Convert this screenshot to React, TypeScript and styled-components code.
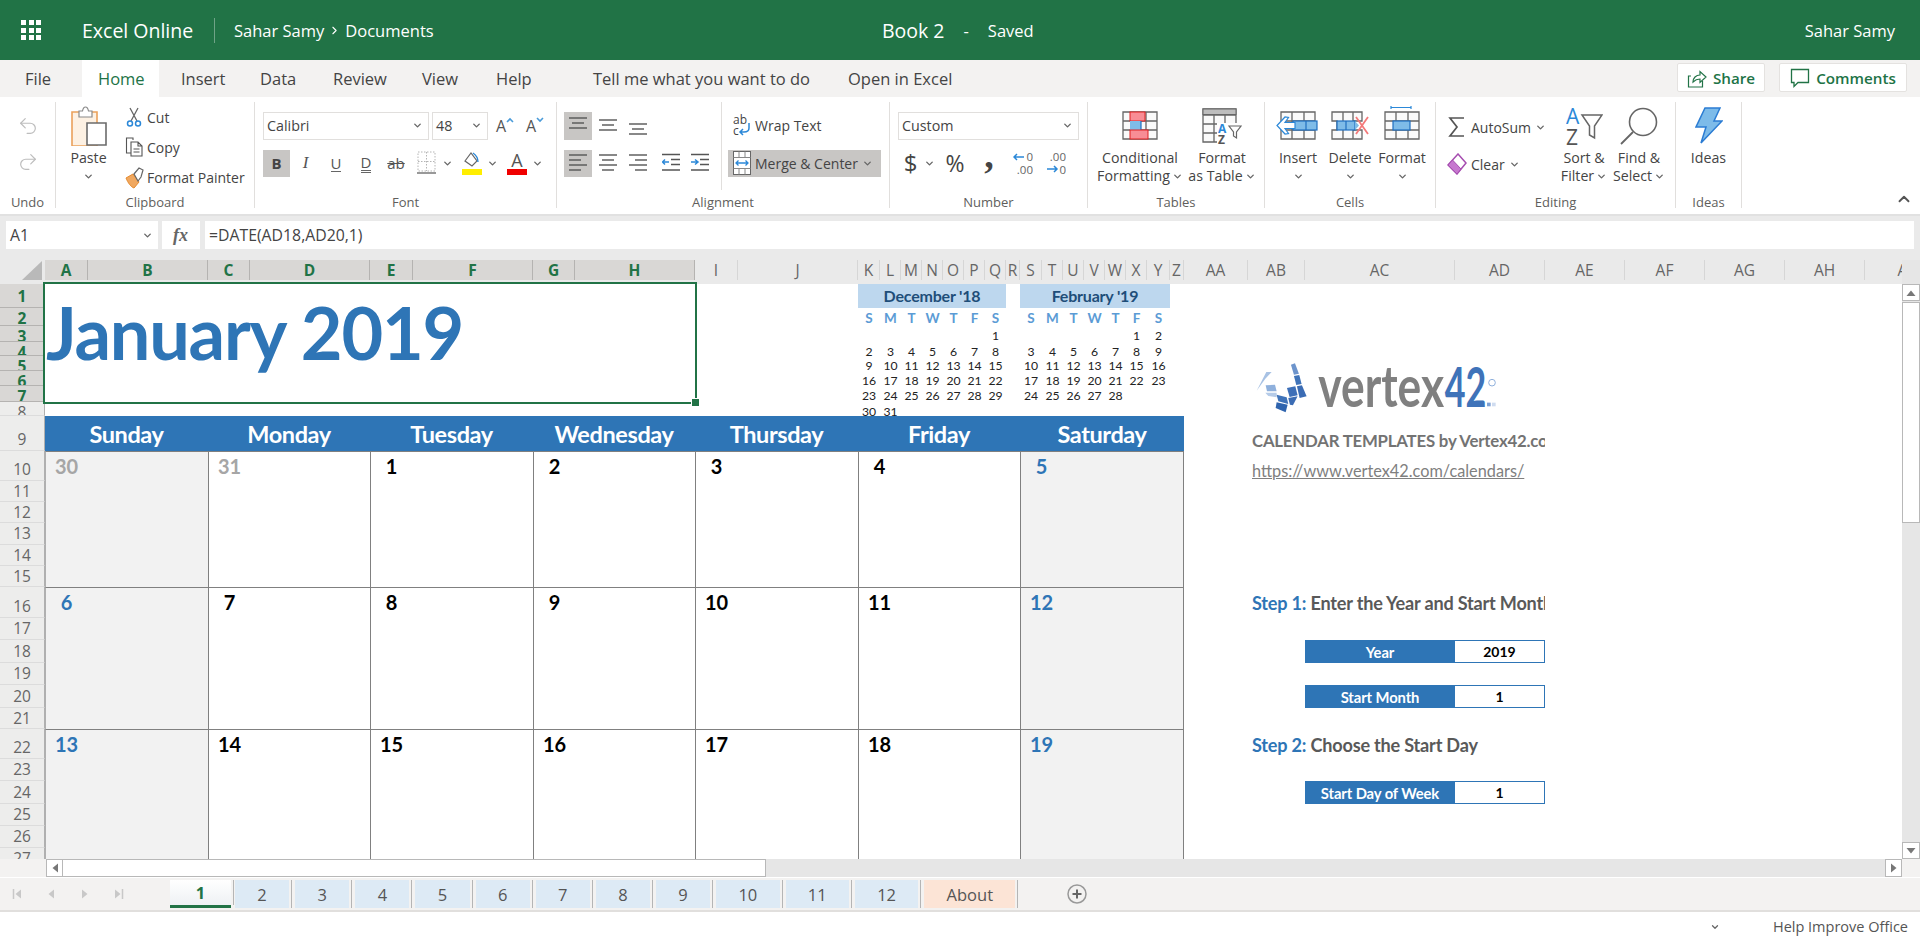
import React from "react";
import styled, { createGlobalStyle } from "styled-components";
import { Undo2, Redo2, ChevronDown, ChevronUp, ChevronRight } from "lucide-react";

const GlobalStyle = createGlobalStyle`
  html, body { margin: 0; padding: 0; background: #fff; }
  body { font-family: "Open Sans", "Noto Sans", sans-serif; }
  * { box-sizing: border-box; }
`;

const UI_FONT = `"Open Sans", "Noto Sans", sans-serif`;
const SHEET_FONT = `Lato, "Liberation Sans", sans-serif`;
const GREEN = "#217346";
const BLUE = "#2e75b6";

/* ---------- sheet data ---------- */
const COLUMNS: [string, number][] = [
  ["A", 43], ["B", 120], ["C", 42], ["D", 120], ["E", 43], ["F", 120], ["G", 42], ["H", 120],
  ["I", 43], ["J", 120], ["K", 22], ["L", 21], ["M", 21], ["N", 21], ["O", 21], ["P", 21], ["Q", 21], ["R", 14],
  ["S", 22], ["T", 21], ["U", 21], ["V", 21], ["W", 21], ["X", 21], ["Y", 23], ["Z", 14],
  ["AA", 64], ["AB", 57], ["AC", 150], ["AD", 90], ["AE", 80], ["AF", 80], ["AG", 80], ["AH", 80], ["AI", 80],
];
const ROW_HEIGHTS = [24, 18, 16, 14, 15, 15, 16, 14, 35, 30, 21, 21, 22, 21, 21, 31, 22, 23, 22, 23, 21, 30, 22, 23, 22, 22, 21];

// grid line of a column: the row header sits in line 1
const col = (name: string) => COLUMNS.findIndex((c) => c[0] === name) + 2;
const row = (n: number) => n + 1;

const DAY_SPANS: [string, string][] = [["A", "C"], ["C", "E"], ["E", "G"], ["G", "I"], ["I", "K"], ["K", "S"], ["S", "AA"]];
const DAY_NAMES = ["Sunday", "Monday", "Tuesday", "Wednesday", "Thursday", "Friday", "Saturday"];
const WEEKS = [
  { from: 10, to: 16, days: ["30", "31", "1", "2", "3", "4", "5"] },
  { from: 16, to: 22, days: ["6", "7", "8", "9", "10", "11", "12"] },
  { from: 22, to: 28, days: ["13", "14", "15", "16", "17", "18", "19"] },
];
const MINI_LETTERS = ["S", "M", "T", "W", "T", "F", "S"];
const MINI_DEC = [
  ["", "", "", "", "", "", "1"],
  ["2", "3", "4", "5", "6", "7", "8"],
  ["9", "10", "11", "12", "13", "14", "15"],
  ["16", "17", "18", "19", "20", "21", "22"],
  ["23", "24", "25", "26", "27", "28", "29"],
  ["30", "31", "", "", "", "", ""],
];
const MINI_FEB = [
  ["", "", "", "", "", "1", "2"],
  ["3", "4", "5", "6", "7", "8", "9"],
  ["10", "11", "12", "13", "14", "15", "16"],
  ["17", "18", "19", "20", "21", "22", "23"],
  ["24", "25", "26", "27", "28", "", ""],
];
const SHEET_TABS = ["2", "3", "4", "5", "6", "7", "8", "9", "10", "11", "12"];

/* ---------- page ---------- */
const Page = styled.div`
  width: 1920px;
  height: 937px;
  display: flex;
  flex-direction: column;
  overflow: hidden;
  font-family: ${UI_FONT};
`;

/* ---------- title bar ---------- */
const TopBar = styled.header`
  height: 60px;
  flex-shrink: 0;
  background: ${GREEN};
  color: #fff;
  display: flex;
  align-items: center;
  position: relative;
`;
const Waffle = styled.div`
  margin-left: 21px;
  width: 20px;
  height: 20px;
  display: grid;
  grid-template-columns: repeat(3, 5px);
  grid-template-rows: repeat(3, 5px);
  gap: 2.5px;
  span { background: #fff; }
`;
const AppName = styled.div`
  margin-left: 41px;
  font-size: 19.5px;
  width: 132px;
  white-space: nowrap;
`;
const TopDivider = styled.div`
  width: 1px;
  height: 25px;
  background: #6fa387;
`;
const Crumb = styled.div`
  font-size: 16.5px;
  margin-left: 19px;
  display: flex;
  align-items: center;
  gap: 4px;
`;
const DocTitle = styled.div`
  position: absolute;
  left: 882px;
  top: 0;
  height: 60px;
  display: flex;
  align-items: center;
  font-size: 19.5px;
  span { font-size: 16.5px; }
  span:first-of-type { margin: 0 19px; }
`;
const UserName = styled.div`
  margin-left: auto;
  margin-right: 25px;
  font-size: 16.5px;
`;

/* ---------- ribbon tabs ---------- */
const TabRow = styled.nav`
  height: 37px;
  flex-shrink: 0;
  background: #f3f2f1;
  display: flex;
  align-items: stretch;
  position: relative;
`;
const RibbonTab = styled.div<{ $w: number; $pl: number; $active?: boolean }>`
  width: ${(p) => p.$w}px;
  padding-left: ${(p) => p.$pl}px;
  display: flex;
  align-items: center;
  font-size: 16.5px;
  color: ${(p) => (p.$active ? GREEN : "#444")};
  background: ${(p) => (p.$active ? "#fff" : "transparent")};
  white-space: nowrap;
`;
const TabActions = styled.div`
  margin-left: auto;
  margin-right: 13px;
  display: flex;
  align-items: center;
  gap: 14px;
`;
const ActionButton = styled.div<{ $w: number }>`
  width: ${(p) => p.$w}px;
  height: 29px;
  margin-top: -2px;
  background: #fff;
  border: 1px solid #e4e2e0;
  border-radius: 2px;
  display: flex;
  align-items: center;
  justify-content: center;
  gap: 6px;
  color: ${GREEN};
  font-size: 15.2px;
  font-weight: 600;
`;

/* ---------- ribbon ---------- */
const Ribbon = styled.section`
  height: 119px;
  flex-shrink: 0;
  background: #fff;
  border-bottom: 2px solid #e1e1e1;
  display: flex;
  padding-top: 5px;
  padding-bottom: 6px;
  color: #444;
`;
const Group = styled.div<{ $w: number }>`
  width: ${(p) => p.$w}px;
  flex-shrink: 0;
  display: flex;
  flex-direction: column;
  border-right: 1px solid #e1dfdd;
`;
const GroupBody = styled.div<{ $pl?: number }>`
  flex: 1;
  display: flex;
  padding-left: ${(p) => p.$pl ?? 0}px;
  min-height: 0;
`;
const GroupLabel = styled.div`
  height: 12px;
  line-height: 12px;
  font-size: 13px;
  text-align: center;
  color: #605e5c;
`;
const TallButton = styled.div<{ $w: number }>`
  width: ${(p) => p.$w}px;
  flex-shrink: 0;
  display: flex;
  flex-direction: column;
  align-items: center;
  font-size: 14.2px;
  line-height: 18px;
  white-space: nowrap;
`;
const TallIcon = styled.div`
  height: 47px;
  display: flex;
  align-items: center;
  justify-content: center;
`;
const TextLine = styled.div`
  height: 18px;
  display: flex;
  align-items: center;
  gap: 2px;
`;
const SmallColumn = styled.div<{ $w?: number; $pl?: number; $pt?: number; $gap?: number }>`
  ${(p) => (p.$w ? `width: ${p.$w}px;` : "")}
  flex-shrink: 0;
  display: flex;
  flex-direction: column;
  padding-left: ${(p) => p.$pl ?? 0}px;
  padding-top: ${(p) => p.$pt ?? 0}px;
  gap: ${(p) => p.$gap ?? 0}px;
`;
const SmallButton = styled.div<{ $gap?: number }>`
  height: 30px;
  display: flex;
  align-items: center;
  gap: ${(p) => p.$gap ?? 4}px;
  font-size: 14px;
  white-space: nowrap;
`;
const ToolStack = styled.div<{ $w?: number }>`
  ${(p) => (p.$w ? `width: ${p.$w}px; flex-shrink: 0;` : "")}
  padding-top: 10px;
  display: flex;
  flex-direction: column;
  gap: 10px;
`;
const ToolRow = styled.div`
  height: 27.5px;
  display: flex;
  align-items: stretch;
`;
const Tool = styled.div<{ $w: number; $h?: number; $ml?: number; $on?: boolean }>`
  width: ${(p) => p.$w}px;
  ${(p) => (p.$h ? `height: ${p.$h}px;` : "")}
  margin-left: ${(p) => p.$ml ?? 0}px;
  flex-shrink: 0;
  display: flex;
  align-items: center;
  justify-content: center;
  background: ${(p) => (p.$on ? "#c8c6c4" : "transparent")};
`;
const DropBox = styled.div<{ $w: number; $ml?: number }>`
  width: ${(p) => p.$w}px;
  margin-left: ${(p) => p.$ml ?? 0}px;
  border: 1.5px solid #e1dfdd;
  display: flex;
  align-items: center;
  justify-content: space-between;
  padding: 0 5px 0 3px;
  font-size: 14.3px;
`;
const GlyphB = styled.span`
  font: 700 15px ${UI_FONT};
  color: #444;
`;
const GlyphI = styled.span`
  font: italic 400 17px "Liberation Serif", serif;
  color: #555;
`;
const GlyphU = styled.span<{ $double?: boolean }>`
  font: 400 15px ${UI_FONT};
  color: #555;
  line-height: 16px;
  border-bottom: ${(p) => (p.$double ? "3px double #666" : "1.5px solid #666")};
`;
const GlyphStrike = styled.span`
  font: 400 15px ${UI_FONT};
  color: #555;
  text-decoration: line-through;
`;
const GlyphLarge = styled.span<{ $size: number }>`
  font-family: ${UI_FONT};
  font-size: ${(p) => p.$size}px;
  color: #444;
  line-height: 22px;
`;
const GlyphComma = styled.span`
  font: 700 38px/22px "Liberation Serif", serif;
  color: #444;
  padding-bottom: 16px;
`;
const GlyphA = styled.span`
  font-size: 16px;
  line-height: 18px;
  color: #555;
`;
const SizeToggle = styled.span`
  display: flex;
  align-items: flex-start;
`;
const InnerDivider = styled.div`
  width: 1px;
  height: 88px;
  background: #e1dfdd;
  flex-shrink: 0;
`;
const WrapColumn = styled.div`
  padding: 10px 0 0 6px;
  display: flex;
  flex-direction: column;
  gap: 10px;
`;
const WrapRow = styled.div<{ $on?: boolean }>`
  width: 153px;
  height: 27.5px;
  display: flex;
  align-items: center;
  gap: 4px;
  padding-left: 5px;
  font-size: 14px;
  white-space: nowrap;
  background: ${(p) => (p.$on ? "#c8c6c4" : "transparent")};
`;
const Collapse = styled.div`
  margin-left: auto;
  align-self: flex-end;
  margin-right: 7px;
  display: flex;
  color: #555;
`;

/* ---------- formula bar ---------- */
const FormulaBar = styled.div`
  height: 44px;
  flex-shrink: 0;
  background: #eaeaea;
  display: flex;
  padding: 5px 6px 11px 6px;
  gap: 4px;
`;
const FormulaBox = styled.div<{ $w?: number }>`
  ${(p) => (p.$w ? `width: ${p.$w}px; flex-shrink: 0;` : "flex: 1; margin-left: 1px;")}
  background: #fff;
  display: flex;
  align-items: center;
  justify-content: ${(p) => (p.$w === 38 ? "center" : "space-between")};
  padding: 0 5px 0 4px;
  font-size: 15.8px;
  color: #444;
`;
const FxMark = styled.span`
  font: italic 700 18px "Liberation Serif", serif;
  color: #666;
`;

/* ---------- sheet ---------- */
const SheetArea = styled.div`
  height: 599px;
  flex-shrink: 0;
  display: flex;
  background: #eaeaea;
`;
const SheetClip = styled.div`
  width: 1902px;
  height: 599px;
  overflow: hidden;
  position: relative;
`;
const SheetGrid = styled.div`
  display: grid;
  width: max-content;
  background: #fff;
  grid-template-columns: 45px ${COLUMNS.map((c) => `${c[1]}px`).join(" ")};
  grid-template-rows: 24px ${ROW_HEIGHTS.map((h) => `${h}px`).join(" ")};
`;
const Corner = styled.div`
  grid-column: 1;
  grid-row: 1;
  background: #eaeaea;
  position: relative;
  &::after {
    content: "";
    position: absolute;
    left: 22px;
    top: 1px;
    border-style: solid;
    border-width: 0 0 19px 20px;
    border-color: transparent transparent #b9b9b9 transparent;
  }
`;
const ColHead = styled.div<{ $i: number; $on: boolean }>`
  grid-column: ${(p) => p.$i + 2};
  grid-row: 1;
  height: 24px;
  background: #eaeaea;
  overflow: hidden;
  div {
    height: 20px;
    display: flex;
    align-items: center;
    justify-content: center;
    font-size: 15.5px;
    font-weight: ${(p) => (p.$on ? 700 : 400)};
    color: ${(p) => (p.$on ? GREEN : "#666")};
    background: ${(p) => (p.$on ? "#d9d7d5" : "transparent")};
    border-right: 1px solid ${(p) => (p.$on ? "#b5b3b1" : "#d6d6d6")};
  }
`;
const RowHead = styled.div<{ $r: number; $h: number; $on: boolean }>`
  grid-column: 1;
  grid-row: ${(p) => p.$r + 1};
  overflow: hidden;
  padding-top: ${(p) => Math.max(4, p.$h - 18)}px;
  text-align: center;
  line-height: 13px;
  font-size: 15.5px;
  font-weight: ${(p) => (p.$on ? 700 : 400)};
  color: ${(p) => (p.$on ? GREEN : "#666")};
  background: ${(p) => (p.$on ? "#d9d7d5" : "#ededec")};
  border-bottom: 1px solid ${(p) => (p.$on ? "#b5b3b1" : "#dcdcdc")};
  border-right: 1px solid #b0b0b0;
`;
const TitleCell = styled.div`
  grid-column: ${col("A")} / ${col("I")};
  grid-row: ${row(1)} / ${row(8)};
  position: relative;
  z-index: 2;
  outline: 2.7px solid ${GREEN};
  padding-left: 1px;
  font: 700 72px/96px ${SHEET_FONT};
  color: ${BLUE};
  letter-spacing: -1.2px;
  white-space: nowrap;
  &::after {
    content: "";
    position: absolute;
    right: -5px;
    bottom: -5px;
    width: 7px;
    height: 7px;
    background: ${GREEN};
    border: 1px solid #fff;
  }
`;
const MiniHeader = styled.div<{ $from: string; $to: string }>`
  grid-column: ${(p) => col(p.$from)} / ${(p) => col(p.$to)};
  grid-row: ${row(1)};
  background: #bdd7ee;
  color: #1f4e79;
  font: 700 16px/24px ${SHEET_FONT};
  letter-spacing: -0.2px;
  text-align: center;
  white-space: nowrap;
`;
const MiniLetter = styled.div<{ $c: number; $r: number }>`
  grid-column: ${(p) => p.$c};
  grid-row: ${(p) => p.$r};
  color: #5b9bd5;
  font: 700 13.5px/21px ${SHEET_FONT};
  text-align: center;
`;
const MiniDay = styled.div<{ $c: number; $r: number }>`
  grid-column: ${(p) => p.$c};
  grid-row: ${(p) => p.$r};
  color: #222;
  font: 400 12.2px/19px ${SHEET_FONT};
  text-align: center;
  white-space: nowrap;
  display: flex;
  justify-content: center;
  z-index: 1;
`;
const DayHeader = styled.div<{ $c1: number; $c2: number }>`
  grid-column: ${(p) => p.$c1} / ${(p) => p.$c2};
  grid-row: ${row(9)};
  background: ${BLUE};
  color: #fff;
  display: flex;
  align-items: center;
  justify-content: center;
  font: 700 23.5px ${SHEET_FONT};
  letter-spacing: -0.4px;
  white-space: nowrap;
`;
const DayCell = styled.div<{ $c1: number; $c2: number; $r1: number; $r2: number; $weekend: boolean; $first: boolean; $last: boolean }>`
  grid-column: ${(p) => p.$c1} / ${(p) => p.$c2};
  grid-row: ${(p) => p.$r1} / ${(p) => p.$r2};
  background: ${(p) => (p.$weekend ? "#f2f2f2" : "#fff")};
  border-top: 1px solid #808080;
  border-left: 1px solid ${(p) => (p.$first ? "#b0b0b0" : "#808080")};
  ${(p) => (p.$last ? "border-right: 1px solid #808080;" : "")}
`;
const DayNumber = styled.div<{ $tone: "muted" | "weekend" | "plain" }>`
  width: 43px;
  height: 30px;
  margin: -1px 0 0 -1px;
  display: flex;
  align-items: center;
  justify-content: center;
  font: 700 20px ${SHEET_FONT};
  color: ${(p) => (p.$tone === "muted" ? "#a6a6a6" : p.$tone === "weekend" ? BLUE : "#000")};
`;
const LogoSlot = styled.div`
  grid-column: ${col("AB")} / ${col("AE")};
  grid-row: ${row(1)} / ${row(9)};
  padding: 78px 0 0 7px;
`;
const PanelHeading = styled.div`
  grid-column: ${col("AB")} / ${col("AE")};
  grid-row: ${row(9)};
  overflow: hidden;
  white-space: nowrap;
  padding: 15px 0 0 4px;
  color: #737373;
  font: 700 16.8px/20px ${SHEET_FONT};
  letter-spacing: -0.2px;
`;
const PanelLink = styled.div`
  grid-column: ${col("AB")} / ${col("AE")};
  grid-row: ${row(10)};
  overflow: hidden;
  white-space: nowrap;
  padding: 0 0 0 4px;
  color: #7f7f7f;
  font: 400 16.3px/40px ${SHEET_FONT};
  text-decoration: underline;
`;
const StepLine = styled.div<{ $r: number }>`
  grid-column: ${col("AB")} / ${col("AE")};
  grid-row: ${(p) => row(p.$r)};
  overflow: hidden;
  white-space: nowrap;
  padding-left: 4px;
  color: #595959;
  font: 700 18.1px/33px ${SHEET_FONT};
  letter-spacing: -0.2px;
  span { color: ${BLUE}; }
`;
const FormLabel = styled.div<{ $r: number }>`
  grid-column: ${col("AC")};
  grid-row: ${(p) => row(p.$r)};
  background: ${BLUE};
  color: #fff;
  display: flex;
  align-items: center;
  justify-content: center;
  font: 700 14.8px ${SHEET_FONT};
  letter-spacing: -0.1px;
  white-space: nowrap;
`;
const FormValue = styled.div<{ $r: number }>`
  grid-column: ${col("AD")};
  grid-row: ${(p) => row(p.$r)};
  border: 1px solid ${BLUE};
  border-left: 0;
  color: #000;
  display: flex;
  align-items: center;
  justify-content: center;
  font: 700 14px ${SHEET_FONT};
`;

/* ---------- scrollbars ---------- */
const VScroll = styled.div`
  width: 18px;
  flex-shrink: 0;
  display: flex;
  flex-direction: column;
  padding-top: 24px;
  background: #e6e6e6;
`;
const ScrollButton = styled.div<{ $w?: number; $h?: number }>`
  width: ${(p) => p.$w ?? 18}px;
  height: ${(p) => p.$h ?? 17}px;
  flex-shrink: 0;
  background: #fff;
  border: 1px solid #b8b8b8;
  display: flex;
  align-items: center;
  justify-content: center;
`;
const VThumb = styled.div`
  height: 221px;
  background: #fff;
  border: 1px solid #b8b8b8;
  margin-top: 1px;
`;
const VGap = styled.div`
  flex: 1;
`;
const HScrollRow = styled.div`
  height: 18px;
  flex-shrink: 0;
  display: flex;
  background: #f3f2f1;
`;
const HTrack = styled.div`
  width: 1856px;
  margin-left: 46px;
  background: #e6e6e6;
  display: flex;
  justify-content: space-between;
`;
const HLeft = styled.div`
  display: flex;
`;
const HThumb = styled.div`
  width: 703px;
  background: #fff;
  border: 1px solid #b8b8b8;
  border-left: 0;
`;

/* ---------- sheet tabs ---------- */
const TabBar = styled.div`
  height: 35px;
  flex-shrink: 0;
  background: #f3f2f1;
  border-top: 1px solid #fff;
  border-bottom: 2px solid #e1dfdd;
  display: flex;
  align-items: center;
`;
const NavArrows = styled.div`
  width: 170px;
  flex-shrink: 0;
  display: flex;
  padding-left: 1px;
`;
const NavArrow = styled.div`
  width: 33.5px;
  display: flex;
  justify-content: center;
`;
const SheetTab = styled.div<{ $w: number; $gap?: number; $kind: "current" | "month" | "about" }>`
  width: ${(p) => p.$w}px;
  height: 28px;
  margin-right: ${(p) => p.$gap ?? 6}px;
  position: relative;
  display: flex;
  align-items: center;
  justify-content: center;
  font-size: 16.5px;
  font-weight: ${(p) => (p.$kind === "current" ? 700 : 400)};
  color: ${(p) => (p.$kind === "current" ? GREEN : "#555")};
  background: ${(p) =>
    p.$kind === "current"
      ? "linear-gradient(#fff, #eef1f4)"
      : p.$kind === "month"
      ? "#ddeaf5"
      : "#fce4d6"};
  ${(p) => (p.$kind === "current" ? `border-bottom: 3px solid ${GREEN};` : "")}
  &::after {
    content: "";
    position: absolute;
    right: -3px;
    top: 0;
    bottom: 0;
    width: 1px;
    background: #b5b5b5;
  }
`;
const AddSheet = styled.div`
  margin-left: 46px;
  display: flex;
`;

/* ---------- status bar ---------- */
const StatusBar = styled.footer`
  flex: 1;
  background: #fff;
  display: flex;
  align-items: center;
  justify-content: flex-end;
  padding-right: 12px;
  font-size: 14.5px;
  color: #555;
  gap: 53px;
  padding-top: 4px;
`;

/* ---------- icons ---------- */
const Chevron: React.FC<{ size?: number }> = ({ size = 11 }) => (
  <ChevronDown size={size} strokeWidth={3} color="#666" />
);

const ShareIcon = () => (
  <svg width="20" height="22" viewBox="0 0 20 22" fill="none" stroke={GREEN} strokeWidth="1.2">
    <path d="M4 9H1.5v11h14v-6" />
    <path d="M6 15c0-4 3-7 7-7V4.5l6 5.5-6 5.500V12c-3 0-5 1-7 3z" />
  </svg>
);
const CommentIcon = () => (
  <svg width="20" height="22" viewBox="0 0 20 22" fill="none" stroke={GREEN} strokeWidth="1.3">
    <path d="M1.500 2.500h17v13H8l-4 4v-4H1.500z" />
  </svg>
);
const PasteIcon = () => (
  <svg width="38" height="40" viewBox="0 0 38 40">
    <path d="M2 6h25v34H2z" fill="#fdf1e3" stroke="#eaa15b" strokeWidth="1.6" />
    <path d="M9 5h3.500c.5-2.500 1.500-4 3-4s2.500 1.500 3 4H22v6H9z" fill="#fff" stroke="#8a8a8a" strokeWidth="1.2" />
    <path d="M17 17h19v22H17z" fill="#fff" stroke="#6b6b6b" strokeWidth="1.6" />
  </svg>
);
const CutIcon = () => (
  <svg width="16" height="20" viewBox="0 0 16 20" fill="none">
    <path d="M4 1l7 13M12 1L5 14" stroke="#666" strokeWidth="1.3" />
    <circle cx="4" cy="16.5" r="2.5" stroke="#2b88d8" strokeWidth="1.5" />
    <circle cx="12" cy="16.5" r="2.5" stroke="#2b88d8" strokeWidth="1.5" />
  </svg>
);
const CopyIcon = () => (
  <svg width="20" height="20" viewBox="0 0 20 20" fill="none" stroke="#555" strokeWidth="1.1">
    <path d="M8 3V1H1.500v15H6" />
    <path d="M6 5h7l4 4v10H6zM13 5v4h4M8.500 12h6M8.500 15h6" />
  </svg>
);
const PainterIcon = () => (
  <svg width="21" height="23" viewBox="0 0 21 23">
    <path d="M1 12l7-4 6 8-5 6c-3-1-6-5-8-10z" fill="#f0a860" stroke="#e58a2e" />
    <path d="M9 8l5-6 4 2-2 7-3 4z" fill="#fff" stroke="#666" strokeWidth="1.2" />
  </svg>
);
const GrowMark: React.FC<{ down?: boolean }> = ({ down }) => (
  <svg width="8" height="6" viewBox="0 0 8 6" fill="none" stroke="#4a9bd9" strokeWidth="1.6">
    <path d={down ? "M1 1l3 3 3-3" : "M1 5l3-3 3 3"} />
  </svg>
);
const BordersIcon = () => (
  <svg width="19" height="24" viewBox="0 0 19 24" fill="none">
    <path d="M1 1h17v19H1zM9.500 1v19M1 10.500h17" stroke="#b5b5b5" strokeDasharray="1.5 1.5" />
    <path d="M0 22h19" stroke="#777" strokeWidth="1.5" />
  </svg>
);
const FillIcon = () => (
  <svg width="20" height="24" viewBox="0 0 20 24">
    <path d="M3 10l6-8 6 8-5 5z" fill="#fff" stroke="#666" strokeWidth="1.2" />
    <path d="M11 2c3 2 5 5 5 9" fill="none" stroke="#2b88d8" strokeWidth="1.3" />
    <rect x="0" y="18" width="20" height="6" fill="#ffee00" />
  </svg>
);
const FontColorIcon = () => (
  <svg width="20" height="24" viewBox="0 0 20 24">
    <text x="10" y="16" textAnchor="middle" fontFamily="Open Sans" fontSize="18" fill="#555">A</text>
    <rect x="0" y="18" width="20" height="6" fill="#f00000" />
  </svg>
);

type Line = [number, number, number];
const LinesIcon: React.FC<{ lines: Line[] }> = ({ lines }) => (
  <svg width="18" height="20" viewBox="0 0 18 20" stroke="#555" strokeWidth="1.4">
    {lines.map(([a, b, y], i) => (
      <line key={i} x1={a} x2={b} y1={y} y2={y} />
    ))}
  </svg>
);
const TOP_ALIGN: Line[] = [[0, 18, 2], [3, 15, 7], [0, 18, 12]];
const MID_ALIGN: Line[] = [[0, 18, 4], [3, 15, 9], [0, 18, 14]];
const BOT_ALIGN: Line[] = [[0, 18, 8], [3, 15, 13], [0, 18, 18]];
const LEFT_ALIGN: Line[] = [[0, 18, 2], [0, 12, 7], [0, 18, 12], [0, 12, 17]];
const CENTER_ALIGN: Line[] = [[0, 18, 2], [3, 15, 7], [0, 18, 12], [3, 15, 17]];
const RIGHT_ALIGN: Line[] = [[0, 18, 2], [6, 18, 7], [0, 18, 12], [6, 18, 17]];

const IndentIcon: React.FC<{ more?: boolean }> = ({ more }) => (
  <svg width="18" height="20" viewBox="0 0 18 20" fill="none">
    <path d="M0 1.500h18M9 6.500h9M9 11.500h9M0 17h18" stroke="#555" strokeWidth="1.4" />
    <path d={more ? "M0 9h6M4 6.500L7 9l-3 2.500" : "M7 9H1M3 6.500L.5 9 3 11.500"} stroke="#2b88d8" strokeWidth="1.5" />
  </svg>
);
const WrapIcon = () => (
  <svg width="18" height="24" viewBox="0 0 18 24">
    <text x="0" y="10" fontFamily="Open Sans" fontSize="12" fill="#444">ab</text>
    <text x="0" y="21" fontFamily="Open Sans" fontSize="12" fill="#444">c</text>
    <path d="M16 9v5c0 3-2 4-5 4H7M10 15l-3 3 3 3" fill="none" stroke="#2b88d8" strokeWidth="1.5" />
  </svg>
);
const MergeIcon = () => (
  <svg width="18" height="24" viewBox="0 0 18 24" fill="none">
    <rect x=".5" y=".5" width="17" height="23" fill="#fff" stroke="#666" />
    <path d="M.5 6.500h17M.5 17.500h17M6 .5v6M12 .5v6M6 17.500v6M12 17.500v6" stroke="#888" />
    <path d="M3 12h12M5.500 9.500L3 12l2.500 2.500M12.500 9.500L15 12l-2.500 2.500" stroke="#2b88d8" strokeWidth="1.3" />
  </svg>
);
const DecimalIcon: React.FC<{ less?: boolean }> = ({ less }) => (
  <svg width="20" height="25" viewBox="0 0 20 25">
    <text x="20" y="10" textAnchor="end" fontFamily="Open Sans" fontSize="11.5" fill="#666">
      {less ? ".00" : "0"}
    </text>
    <text x="20" y="23" textAnchor="end" fontFamily="Open Sans" fontSize="11.5" fill="#666">
      {less ? "0" : ".00"}
    </text>
    <path
      d={less ? "M1 18h10M8 15l3 3-3 3" : "M11 6H1M4 3L1 6l3 3"}
      fill="none"
      stroke="#2b88d8"
      strokeWidth="1.5"
    />
  </svg>
);
const CELL_LINES = "M1 1h34v27H1zM1 10h34M1 19h34M12 1v27M24 1v27";
const ConditionalIcon = () => (
  <svg width="36" height="29" viewBox="0 0 36 29">
    <path d={CELL_LINES} fill="#fafafa" stroke="#666" strokeWidth="1.3" />
    <rect x="8" y="1" width="15" height="9" fill="#f88d95" stroke="#e02020" />
    <rect x="8" y="10" width="11" height="9" fill="#7fbce8" />
    <path d="M19 10v9" stroke="#1f6fc0" strokeWidth="1.2" />
    <rect x="8" y="19" width="18" height="9" fill="#f88d95" stroke="#e02020" />
  </svg>
);
const TableIcon = () => (
  <svg width="40" height="36" viewBox="0 0 40 36">
    <path d="M1 1h33v33H1zM1 7h33M1 16h33M1 25h33M12 7v27M23 7v27" fill="#fafafa" stroke="#666" strokeWidth="1.3" />
    <rect x="1" y="1" width="33" height="5.5" fill="#bdbdbd" stroke="#666" />
    <rect x="15" y="15" width="25" height="21" fill="#fff" />
    <text x="16" y="25" fontFamily="Open Sans" fontWeight="700" fontSize="12" fill="#2b88d8">A</text>
    <text x="16" y="36" fontFamily="Open Sans" fontWeight="700" fontSize="12" fill="#555">Z</text>
    <path d="M27 18h12l-4.500 6v6l-3-2v-4z" fill="#fff" stroke="#666" strokeWidth="1.2" />
  </svg>
);
const InsertIcon = () => (
  <svg width="52" height="29" viewBox="0 0 52 29">
    <g transform="translate(8 0)"><path d={CELL_LINES} fill="#fafafa" stroke="#666" strokeWidth="1.3" /></g>
    <rect x="21" y="10" width="24" height="9" fill="#7fbce8" stroke="#1f6fc0" strokeWidth="1.2" />
    <path d="M34 10v9" stroke="#1f6fc0" strokeWidth="1.2" />
    <path d="M23 11.500H13l3.500-5L13 6 5 14.500 13 23l3.500-.5-3.500-5h10z" fill="#fff" stroke="#2b88d8" strokeWidth="1.2" />
  </svg>
);
const DeleteIcon = () => (
  <svg width="38" height="29" viewBox="0 0 38 29">
    <path d="M1 1h30v9h-8v9h8v9H1v-9h5v-9H1zM12 1v9M22 1v9M12 19v9M22 19v9" fill="#fafafa" stroke="#666" strokeWidth="1.3" />
    <rect x="6" y="10" width="18" height="9" fill="#7fbce8" stroke="#1f6fc0" strokeWidth="1.2" />
    <path d="M15 10v9" stroke="#1f6fc0" strokeWidth="1.2" />
    <path d="M24 10l4 4.500-4 4.500z" fill="#7fbce8" />
    <path d="M25 6l12 17M37 6L25 23" stroke="#f47a7a" strokeWidth="1.8" />
  </svg>
);
const FormatCellsIcon = () => (
  <svg width="36" height="39" viewBox="0 0 36 39">
    <path d="M7 1.500h20M7 0v3M27 0v3" stroke="#2b88d8" strokeWidth="1.2" />
    <g transform="translate(0 5)">
      <path d={CELL_LINES} fill="#fafafa" stroke="#666" strokeWidth="1.3" />
      <rect x="9" y="10" width="17" height="9" fill="#7fbce8" stroke="#1f6fc0" strokeWidth="1.2" />
    </g>
  </svg>
);
const SigmaIcon = () => (
  <svg width="18" height="20" viewBox="0 0 18 20" fill="none" stroke="#555" strokeWidth="1.7">
    <path d="M16 1H2l7 9-7 9h14" />
  </svg>
);
const EraserIcon = () => (
  <svg width="20" height="22" viewBox="0 0 20 22">
    <path d="M11 1l8 9-9 11-9-9z" fill="#fff" stroke="#a64db0" strokeWidth="1.5" />
    <path d="M5.500 7l8.500 9-4 5-9-9z" fill="#c678cf" stroke="#a64db0" strokeWidth="1" />
  </svg>
);
const SortIcon = () => (
  <svg width="37" height="42" viewBox="0 0 37 42">
    <text x="0" y="19" fontFamily="Open Sans" fontSize="21" fill="#2b88d8">A</text>
    <text x="0" y="40" fontFamily="Open Sans" fontSize="21" fill="#555">Z</text>
    <path d="M16 10h20l-7.500 11v12l-5-3v-9z" fill="#fff" stroke="#666" strokeWidth="1.5" />
  </svg>
);
const SearchIcon = () => (
  <svg width="38" height="38" viewBox="0 0 38 38" fill="none" stroke="#666">
    <circle cx="23" cy="15" r="13.5" strokeWidth="1.6" />
    <path d="M13 25L1 37" strokeWidth="1.8" />
  </svg>
);
const BoltIcon = () => (
  <svg width="28" height="37" viewBox="0 0 28 37">
    <path d="M10 1h15l-6 13h8L6 36l5-16H1z" fill="#7dbbe9" stroke="#2b7cd3" strokeWidth="1.5" />
  </svg>
);
const Triangle: React.FC<{ dir: "up" | "down" | "left" | "right"; color?: string; bar?: boolean }> = ({
  dir,
  color = "#777",
  bar,
}) => {
  const rot = { up: 0, right: 90, down: 180, left: 270 }[dir];
  return (
    <svg width="12" height="12" viewBox="0 0 12 12" style={{ transform: `rotate(${rot}deg)` }}>
      <path d="M1.500 9L6 3.500 10.500 9z" fill={color} />
      {bar && <path d="M1 1.500h10" stroke={color} strokeWidth="1.5" />}
    </svg>
  );
};
const PlusCircle = () => (
  <svg width="20" height="20" viewBox="0 0 20 20" fill="none">
    <circle cx="10" cy="10" r="9" stroke="#999" strokeWidth="1.5" />
    <path d="M10 5.500v9M5.500 10h9" stroke="#666" strokeWidth="2" />
  </svg>
);
const Vertex42Logo = () => (
  <svg width="243" height="52" viewBox="100 60 730 156">
    <polygon points="208,68 220,64 232,95 217,98" fill="#6d94cc" />
    <polygon points="217,102 233,99 240,126 224,129" fill="#3f73b9" />
    <polygon points="226,133 241,130 255,163 234,168" fill="#3b6cb4" />
    <polygon points="196,138 221,133 228,160 204,165" fill="#3d6fb8" />
    <polygon points="105,146 131,110 150,90 134,90" fill="#a8c2e4" />
    <polygon points="132,130 160,128 165,148 136,148" fill="#8fb0dc" />
    <polygon points="131,152 165,152 165,166 140,162" fill="#b5cbe8" />
    <polygon points="165,158 195,166 200,186 170,178" fill="#3f73b9" />
    <polygon points="200,168 228,163 214,190 205,188" fill="#3b6cb4" />
    <polygon points="165,181 198,188 192,211 162,198" fill="#2f64ae" />
    <text x="290" y="194" fontFamily="Lato" fontWeight="700" fontSize="170" fill="#808080" textLength="378" lengthAdjust="spacingAndGlyphs">vertex</text>
    <text x="670" y="194" fontFamily="Lato" fontWeight="700" fontSize="165" fill="#3f73b9" textLength="125" lengthAdjust="spacingAndGlyphs">42</text>
    <circle cx="812" cy="122" r="10" fill="none" stroke="#8fb0dc" strokeWidth="3" />
    <rect x="797" y="182" width="11" height="11" fill="#7fa3d6" />
    <rect x="812" y="182" width="11" height="11" fill="#cfdcf0" />
  </svg>
);

// name, width, left padding of the text, active
const ribbonTabs: [string, number, number, boolean?][] = [
  ["File", 82, 25],
  ["Home", 77, 16, true],
  ["Insert", 83, 22],
  ["Data", 72, 18],
  ["Review", 88, 19],
  ["View", 78, 20],
  ["Help", 95, 16],
  ["Tell me what you want to do", 255, 18],
  ["Open in Excel", 130, 18],
];

const MiniMonth: React.FC<{ first: string; weeks: string[][] }> = ({ first, weeks }) => {
  const start = col(first);
  return (
    <>
      {MINI_LETTERS.map((l, i) => (
        <MiniLetter key={i} $c={start + i} $r={row(2)}>{l}</MiniLetter>
      ))}
      {weeks.map((w, r) =>
        w.map((d, i) =>
          d ? <MiniDay key={`${r}-${i}`} $c={start + i} $r={row(3 + r)}>{d}</MiniDay> : null
        )
      )}
    </>
  );
};

const App: React.FC = () => {
  return (
    <Page>
      <GlobalStyle />
      <TopBar>
        <Waffle>{Array.from({ length: 9 }, (_, i) => <span key={i} />)}</Waffle>
        <AppName>Excel Online</AppName>
        <TopDivider />
        <Crumb>
          Sahar Samy <ChevronRight size={13} color="#fff" /> Documents
        </Crumb>
        <DocTitle>
          Book 2<span>-</span><span>Saved</span>
        </DocTitle>
        <UserName>Sahar Samy</UserName>
      </TopBar>

      <TabRow>
        {ribbonTabs.map(([name, w, pl, active]) => (
          <RibbonTab key={name} $w={w} $pl={pl} $active={active}>{name}</RibbonTab>
        ))}
        <TabActions>
          <ActionButton $w={88}><ShareIcon />Share</ActionButton>
          <ActionButton $w={128}><CommentIcon />Comments</ActionButton>
        </TabActions>
      </TabRow>

      <Ribbon>
        <Group $w={56}>
          <GroupBody>
            <SmallColumn $w={55} $pt={10} $gap={8}>
              <Tool $w={55} $h={28}><Undo2 size={22} strokeWidth={1.3} color="#bdbdbd" /></Tool>
              <Tool $w={55} $h={28}><Redo2 size={22} strokeWidth={1.3} color="#bdbdbd" /></Tool>
            </SmallColumn>
          </GroupBody>
          <GroupLabel>Undo</GroupLabel>
        </Group>

        <Group $w={199}>
          <GroupBody>
            <TallButton $w={65}>
              <TallIcon><PasteIcon /></TallIcon>
              <TextLine>Paste</TextLine>
              <TextLine><Chevron /></TextLine>
            </TallButton>
            <SmallColumn $pl={3}>
              <SmallButton $gap={3}><Tool $w={20}><CutIcon /></Tool>Cut</SmallButton>
              <SmallButton $gap={1}><Tool $w={22}><CopyIcon /></Tool>Copy</SmallButton>
              <SmallButton $gap={0}><Tool $w={23}><PainterIcon /></Tool>Format Painter</SmallButton>
            </SmallColumn>
          </GroupBody>
          <GroupLabel>Clipboard</GroupLabel>
        </Group>

        <Group $w={302}>
          <GroupBody $pl={8}>
            <ToolStack>
              <ToolRow>
                <DropBox $w={166}>Calibri<Chevron /></DropBox>
                <DropBox $w={56} $ml={3}>48<Chevron /></DropBox>
                <Tool $w={26} $ml={4}><SizeToggle><GlyphA>A</GlyphA><GrowMark /></SizeToggle></Tool>
                <Tool $w={26} $ml={4}><SizeToggle><GlyphA>A</GlyphA><GrowMark down /></SizeToggle></Tool>
              </ToolRow>
              <ToolRow>
                <Tool $w={27} $on><GlyphB>B</GlyphB></Tool>
                <Tool $w={31}><GlyphI>I</GlyphI></Tool>
                <Tool $w={30}><GlyphU>U</GlyphU></Tool>
                <Tool $w={30}><GlyphU $double>D</GlyphU></Tool>
                <Tool $w={30}><GlyphStrike>ab</GlyphStrike></Tool>
                <Tool $w={30}><BordersIcon /></Tool>
                <Tool $w={12}><Chevron /></Tool>
                <Tool $w={28} $ml={5}><FillIcon /></Tool>
                <Tool $w={12}><Chevron /></Tool>
                <Tool $w={28} $ml={5}><FontColorIcon /></Tool>
                <Tool $w={12}><Chevron /></Tool>
              </ToolRow>
            </ToolStack>
          </GroupBody>
          <GroupLabel>Font</GroupLabel>
        </Group>

        <Group $w={333}>
          <GroupBody $pl={7}>
            <ToolStack $w={157}>
              <ToolRow>
                <Tool $w={28} $on><LinesIcon lines={TOP_ALIGN} /></Tool>
                <Tool $w={28} $ml={2}><LinesIcon lines={MID_ALIGN} /></Tool>
                <Tool $w={28} $ml={2}><LinesIcon lines={BOT_ALIGN} /></Tool>
              </ToolRow>
              <ToolRow>
                <Tool $w={28} $on><LinesIcon lines={LEFT_ALIGN} /></Tool>
                <Tool $w={28} $ml={2}><LinesIcon lines={CENTER_ALIGN} /></Tool>
                <Tool $w={28} $ml={2}><LinesIcon lines={RIGHT_ALIGN} /></Tool>
                <Tool $w={28} $ml={5}><IndentIcon /></Tool>
                <Tool $w={28} $ml={1}><IndentIcon more /></Tool>
              </ToolRow>
            </ToolStack>
            <InnerDivider />
            <WrapColumn>
              <WrapRow><WrapIcon />Wrap Text</WrapRow>
              <WrapRow $on><MergeIcon />Merge &amp; Center<Chevron /></WrapRow>
            </WrapColumn>
          </GroupBody>
          <GroupLabel>Alignment</GroupLabel>
        </Group>

        <Group $w={198}>
          <GroupBody $pl={8}>
            <ToolStack>
              <ToolRow>
                <DropBox $w={181}>Custom<Chevron /></DropBox>
              </ToolRow>
              <ToolRow>
                <Tool $w={25}><GlyphLarge $size={24}>$</GlyphLarge></Tool>
                <Tool $w={12}><Chevron /></Tool>
                <Tool $w={34} $ml={3}><GlyphLarge $size={23}>%</GlyphLarge></Tool>
                <Tool $w={34}><GlyphComma>,</GlyphComma></Tool>
                <Tool $w={33}><DecimalIcon /></Tool>
                <Tool $w={34}><DecimalIcon less /></Tool>
              </ToolRow>
            </ToolStack>
          </GroupBody>
          <GroupLabel>Number</GroupLabel>
        </Group>

        <Group $w={177}>
          <GroupBody $pl={4}>
            <TallButton $w={96}>
              <TallIcon><ConditionalIcon /></TallIcon>
              <TextLine>Conditional</TextLine>
              <TextLine>Formatting <Chevron /></TextLine>
            </TallButton>
            <TallButton $w={68}>
              <TallIcon><TableIcon /></TallIcon>
              <TextLine>Format</TextLine>
              <TextLine>as Table <Chevron /></TextLine>
            </TallButton>
          </GroupBody>
          <GroupLabel>Tables</GroupLabel>
        </Group>

        <Group $w={171}>
          <GroupBody $pl={7}>
            <TallButton $w={52}>
              <TallIcon><InsertIcon /></TallIcon>
              <TextLine>Insert</TextLine>
              <TextLine><Chevron /></TextLine>
            </TallButton>
            <TallButton $w={52}>
              <TallIcon><DeleteIcon /></TallIcon>
              <TextLine>Delete</TextLine>
              <TextLine><Chevron /></TextLine>
            </TallButton>
            <TallButton $w={52}>
              <TallIcon><FormatCellsIcon /></TallIcon>
              <TextLine>Format</TextLine>
              <TextLine><Chevron /></TextLine>
            </TallButton>
          </GroupBody>
          <GroupLabel>Cells</GroupLabel>
        </Group>

        <Group $w={240}>
          <GroupBody>
            <SmallColumn $w={120} $pl={11} $pt={10} $gap={7}>
              <SmallButton><Tool $w={20}><SigmaIcon /></Tool>AutoSum<Chevron /></SmallButton>
              <SmallButton><Tool $w={20}><EraserIcon /></Tool>Clear<Chevron /></SmallButton>
            </SmallColumn>
            <TallButton $w={56}>
              <TallIcon><SortIcon /></TallIcon>
              <TextLine>Sort &amp;</TextLine>
              <TextLine>Filter <Chevron /></TextLine>
            </TallButton>
            <TallButton $w={54}>
              <TallIcon><SearchIcon /></TallIcon>
              <TextLine>Find &amp;</TextLine>
              <TextLine>Select <Chevron /></TextLine>
            </TallButton>
          </GroupBody>
          <GroupLabel>Editing</GroupLabel>
        </Group>

        <Group $w={66}>
          <GroupBody>
            <TallButton $w={65}>
              <TallIcon><BoltIcon /></TallIcon>
              <TextLine>Ideas</TextLine>
            </TallButton>
          </GroupBody>
          <GroupLabel>Ideas</GroupLabel>
        </Group>

        <Collapse><ChevronUp size={18} strokeWidth={2.5} /></Collapse>
      </Ribbon>

      <FormulaBar>
        <FormulaBox $w={152}>A1<Chevron /></FormulaBox>
        <FormulaBox $w={38}><FxMark>fx</FxMark></FormulaBox>
        <FormulaBox>=DATE(AD18,AD20,1)</FormulaBox>
      </FormulaBar>

      <SheetArea>
        <SheetClip>
          <SheetGrid>
            <Corner />
            {COLUMNS.map(([name], i) => (
              <ColHead key={name} $i={i} $on={i < 8}><div>{name}</div></ColHead>
            ))}
            {ROW_HEIGHTS.map((h, i) => (
              <RowHead key={i} $r={i + 1} $h={h} $on={i < 7}>{i + 1}</RowHead>
            ))}

            <TitleCell>January 2019</TitleCell>

            <MiniHeader $from="K" $to="R">December '18</MiniHeader>
            <MiniHeader $from="S" $to="Z">February '19</MiniHeader>
            <MiniMonth first="K" weeks={MINI_DEC} />
            <MiniMonth first="S" weeks={MINI_FEB} />

            {DAY_NAMES.map((d, i) => (
              <DayHeader key={d} $c1={col(DAY_SPANS[i][0])} $c2={col(DAY_SPANS[i][1])}>{d}</DayHeader>
            ))}
            {WEEKS.map((w, wi) =>
              w.days.map((d, i) => (
                <DayCell
                  key={`${wi}-${i}`}
                  $c1={col(DAY_SPANS[i][0])}
                  $c2={col(DAY_SPANS[i][1])}
                  $r1={row(w.from)}
                  $r2={row(w.to)}
                  $weekend={i === 0 || i === 6}
                  $first={i === 0}
                  $last={i === 6}
                >
                  <DayNumber $tone={wi === 0 && i < 2 ? "muted" : i === 0 || i === 6 ? "weekend" : "plain"}>{d}</DayNumber>
                </DayCell>
              ))
            )}

            <LogoSlot><Vertex42Logo /></LogoSlot>
            <PanelHeading>CALENDAR TEMPLATES by Vertex42.com</PanelHeading>
            <PanelLink>https://www.vertex42.com/calendars/</PanelLink>
            <StepLine $r={16}><span>Step 1:</span> Enter the Year and Start Month</StepLine>
            <FormLabel $r={18}>Year</FormLabel>
            <FormValue $r={18}>2019</FormValue>
            <FormLabel $r={20}>Start Month</FormLabel>
            <FormValue $r={20}>1</FormValue>
            <StepLine $r={22}><span>Step 2:</span> Choose the Start Day</StepLine>
            <FormLabel $r={24}>Start Day of Week</FormLabel>
            <FormValue $r={24}>1</FormValue>
          </SheetGrid>
        </SheetClip>
        <VScroll>
          <ScrollButton><Triangle dir="up" /></ScrollButton>
          <VThumb />
          <VGap />
          <ScrollButton><Triangle dir="down" /></ScrollButton>
        </VScroll>
      </SheetArea>

      <HScrollRow>
        <HTrack>
          <HLeft>
            <ScrollButton $w={17} $h={18}><Triangle dir="left" /></ScrollButton>
            <HThumb />
          </HLeft>
          <ScrollButton $w={17} $h={18}><Triangle dir="right" /></ScrollButton>
        </HTrack>
      </HScrollRow>

      <TabBar>
        <NavArrows>
          <NavArrow><Triangle dir="left" color="#c8c8c8" bar /></NavArrow>
          <NavArrow><Triangle dir="left" color="#c8c8c8" /></NavArrow>
          <NavArrow><Triangle dir="right" color="#c8c8c8" /></NavArrow>
          <NavArrow><Triangle dir="right" color="#c8c8c8" bar /></NavArrow>
        </NavArrows>
        <SheetTab $w={61} $gap={4} $kind="current">1</SheetTab>
        {SHEET_TABS.map((t) => (
          <SheetTab key={t} $w={t.length > 1 ? 63.4 : 54.15} $kind="month">{t}</SheetTab>
        ))}
        <SheetTab $w={91} $kind="about">About</SheetTab>
        <AddSheet><PlusCircle /></AddSheet>
      </TabBar>

      <StatusBar>
        <Chevron size={10} />
        Help Improve Office
      </StatusBar>
    </Page>
  );
};

export default App;
